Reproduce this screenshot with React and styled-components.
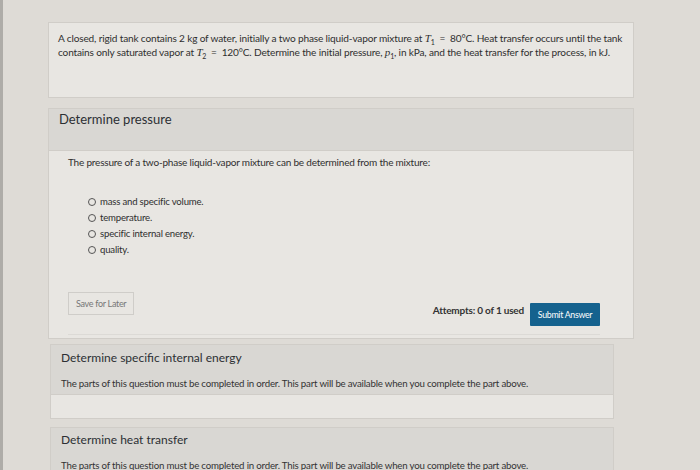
import React from "react";
import styled, { createGlobalStyle } from "styled-components";

const Global = createGlobalStyle`
  html, body { margin: 0; padding: 0; }
  body {
    background: #dedbd6;
    font-family: Lato, "Open Sans", sans-serif;
    color: #2f2f2f;
    width: 700px;
    height: 470px;
    overflow: hidden;
  }
`;

const Page = styled.div`
  display: flex;
  flex-direction: column;
  padding: 22px 0 0 45px;
  border-left: 3px solid #aeaca8;
  box-sizing: border-box;
  height: 470px;
  overflow: hidden;
`;

const Card = styled.div`
  flex-shrink: 0;
  width: ${(p) => p.$w}px;
  background: #e8e6e2;
  border: 1px solid #d0cdc8;
  box-sizing: border-box;
  margin: ${(p) => p.$mt || 0}px 0 0 ${(p) => p.$ml || 0}px;
`;

const Problem = styled(Card)`
  height: 76px;
  padding: 8px 4px 0 9px;
  font-size: 10.1px;
  line-height: 14px;
  letter-spacing: -0.16px;
`;

const Var = styled.i`
  font-family: "Liberation Serif", serif;
  font-size: 11px;
`;

const Sub = styled.sub`
  font-size: 7px;
  line-height: 0;
`;

const Band = styled.div`
  background: #d9d7d3;
  padding: ${(p) => p.$pad};
  height: ${(p) => p.$h}px;
  box-sizing: border-box;
  border-bottom: 1px solid #d0cdc8;
`;

const Title = styled.div`
  font-size: ${(p) => p.$size || 13}px;
  color: #2c2f33;
  line-height: 18px;
`;

const Body = styled.div`
  padding: 5px 33px 0 19px;
  height: ${(p) => p.$h}px;
  box-sizing: border-box;
  font-size: 10px;
  line-height: 13px;
  letter-spacing: -0.2px;
`;

const Options = styled.div`
  display: flex;
  flex-direction: column;
  gap: 3px;
  margin: 26px 0 0 20px;
`;

const Option = styled.label`
  display: flex;
  align-items: center;
  gap: 4px;
  font-size: 9.6px;
  line-height: 13px;
`;

const Radio = styled.span`
  width: 6px;
  height: 6px;
  border: 1.3px solid #555;
  border-radius: 50%;
`;

const Actions = styled.div`
  display: flex;
  align-items: flex-start;
  margin-top: 36px;
  padding-bottom: 8px;
  border-bottom: 1px solid #dcdad6;
`;

const SaveBtn = styled.div`
  border: 1px solid #cfcdc9;
  padding: 5px 7px;
  height: 23px;
  box-sizing: border-box;
  font-size: 9px;
  line-height: 12px;
  color: #777;
  letter-spacing: -0.3px;
`;

const Attempts = styled.div`
  margin-left: auto;
  margin-top: 12px;
  font-size: 10px;
  font-weight: 700;
  color: #333;
  letter-spacing: -0.2px;
`;

const Submit = styled.div`
  margin-left: 6px;
  margin-top: 11px;
  background: #15628e;
  color: #fff;
  font-size: 8.8px;
  line-height: 11px;
  letter-spacing: -0.3px;
  padding: 6px 0;
  height: 23px;
  width: 70px;
  box-sizing: border-box;
  text-align: center;
  border-radius: 1px;
`;

const Note = styled.div`
  font-size: 9.7px;
  letter-spacing: -0.2px;
  line-height: 13px;
  margin-top: ${(p) => p.$mt}px;
  color: #333;
`;

const Strip = styled.div`
  height: ${(p) => p.$h}px;
`;

export default function App() {
  return (
    <>
      <Global />
      <Page>
        <Problem $w={586}>
          A closed, rigid tank contains 2 kg of water, initially a two phase liquid-vapor mixture at <Var>T</Var><Sub>1</Sub> &nbsp;=&nbsp; 80°C. Heat transfer occurs until the tank contains only saturated vapor at <Var>T</Var><Sub>2</Sub> &nbsp;=&nbsp; 120°C. Determine the initial pressure, <Var>p</Var><Sub>1</Sub>, in kPa, and the heat transfer for the process, in kJ.
        </Problem>
        <Card $w={586} $mt={10}>
          <Band $pad="1px 10px" $h={42}>
            <Title>Determine pressure</Title>
          </Band>
          <Body $h={187}>
            The pressure of a two-phase liquid-vapor mixture can be determined from the mixture:
            <Options>
              <Option><Radio />mass and specific volume.</Option>
              <Option><Radio />temperature.</Option>
              <Option><Radio />specific internal energy.</Option>
              <Option><Radio />quality.</Option>
            </Options>
            <Actions>
              <SaveBtn>Save for Later</SaveBtn>
              <Attempts>Attempts: 0 of 1 used</Attempts>
              <Submit>Submit Answer</Submit>
            </Actions>
          </Body>
        </Card>
        <Card $w={564} $ml={2} $mt={5}>
          <Band $pad="4px 10px 0" $h={50}>
            <Title $size={12}>Determine specific internal energy</Title>
            <Note $mt={10}>The parts of this question must be completed in order. This part will be available when you complete the part above.</Note>
          </Band>
          <Strip $h={23} />
        </Card>
        <Card $w={564} $ml={2} $mt={8}>
          <Band $pad="3px 10px 0" $h={50}>
            <Title $size={12}>Determine heat transfer</Title>
            <Note $mt={10}>The parts of this question must be completed in order. This part will be available when you complete the part above.</Note>
          </Band>
        </Card>
      </Page>
    </>
  );
}
